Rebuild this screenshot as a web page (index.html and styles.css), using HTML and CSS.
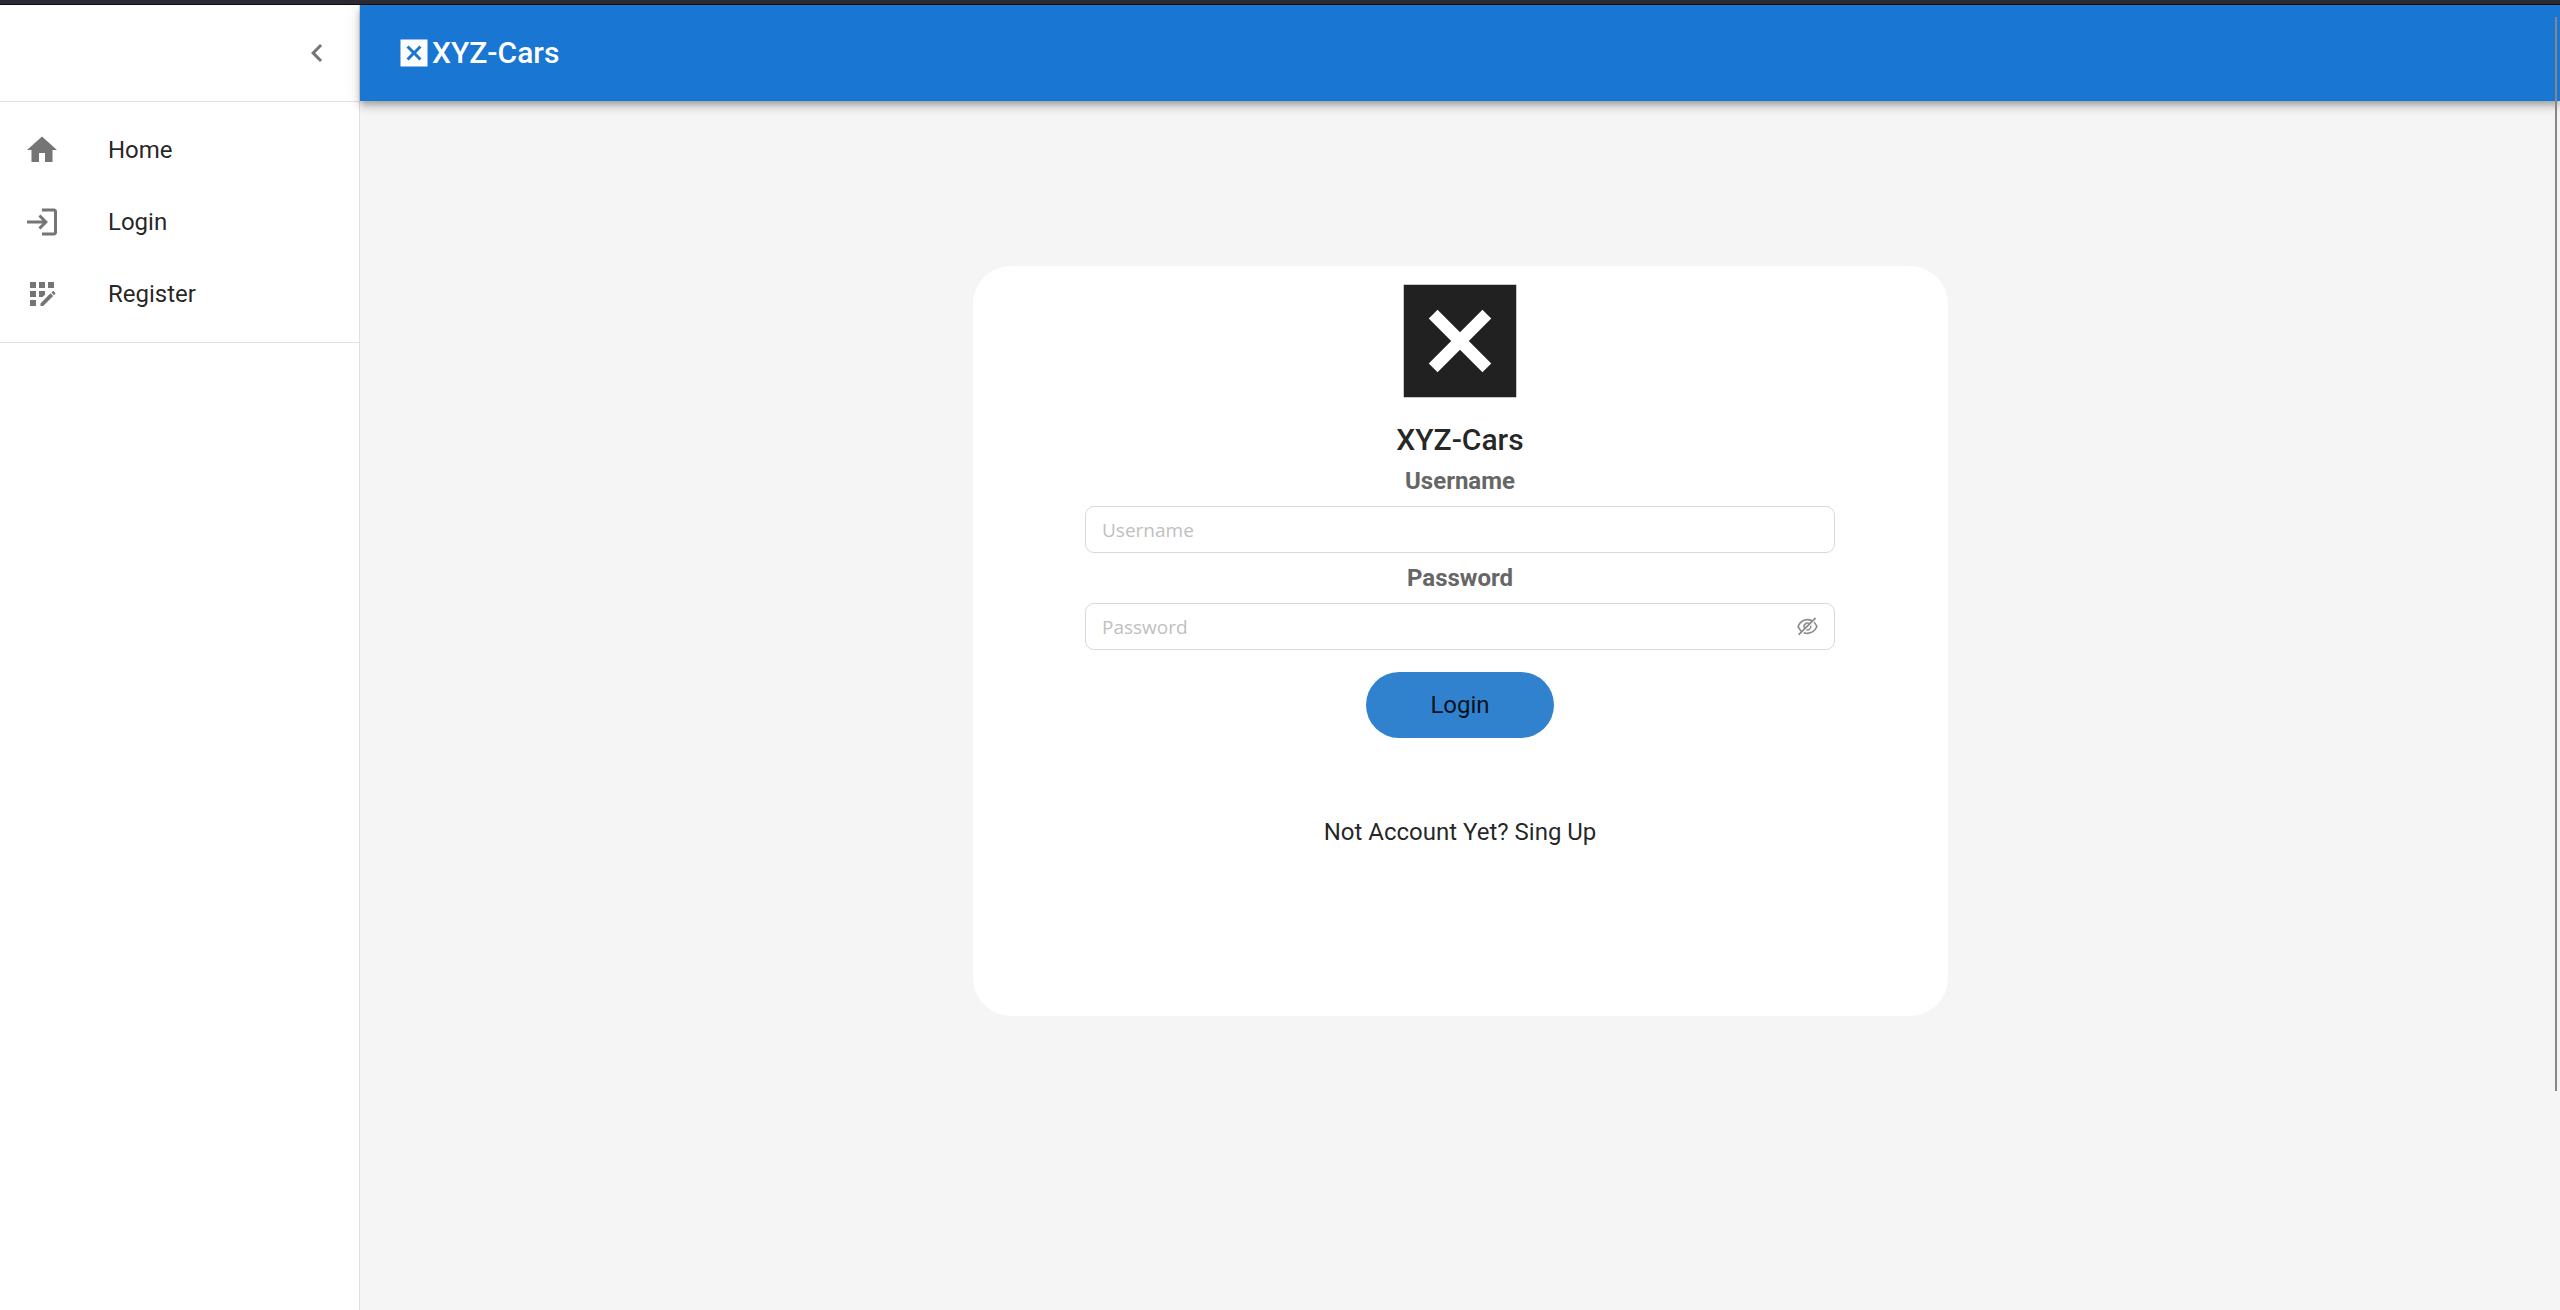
FILE: index.html
```html
<!DOCTYPE html>
<html lang="en">
<head>
<meta charset="utf-8">
<meta name="viewport" content="width=device-width, initial-scale=1">
<title>XYZ-Cars</title>
<link rel="stylesheet" href="styles.css">
</head>
<body>
<div class="window-edge"></div>
<div class="app">
  <aside class="drawer">
    <div class="drawer-header">
      <button class="icon-button" type="button" aria-label="Collapse menu">
        <svg class="icon" viewBox="0 0 24 24"><path d="M15.41 7.41 14 6l-6 6 6 6 1.41-1.41L10.83 12z"/></svg>
      </button>
    </div>
    <nav class="menu">
      <a class="menu-item" href="#home">
        <svg class="icon" viewBox="0 0 24 24"><path d="M10 20v-6h4v6h5v-8h3L12 3 2 12h3v8z"/></svg>
        <span>Home</span>
      </a>
      <a class="menu-item" href="#login">
        <svg class="icon" viewBox="0 0 24 24"><path d="M11 7 9.6 8.4l2.6 2.6H2v2h10.2l-2.6 2.6L11 17l5-5-5-5zm9 12h-8v2h8c1.1 0 2-.9 2-2V5c0-1.1-.9-2-2-2h-8v2h8v14z"/></svg>
        <span>Login</span>
      </a>
      <a class="menu-item" href="#register">
        <svg class="icon" viewBox="0 0 24 24"><path d="M10 4h4v4h-4zM4 16h4v4H4zm0-6h4v4H4zm0-6h4v4H4zm10 8.42V10h-4v4h2.42zm6.88-1.13-1.17-1.17c-.16-.16-.42-.16-.58 0l-.88.88L20 12.75l.88-.88c.16-.16.16-.42 0-.58zM11 18.25V20h1.75l6.67-6.67-1.75-1.75zM16 4h4v4h-4z"/></svg>
        <span>Register</span>
      </a>
    </nav>
  </aside>
  <div class="page">
    <header class="app-bar">
      <svg class="icon icon-light" viewBox="0 0 24 24"><path d="M3 3v18h18V3H3zm14 12.59L15.59 17 12 13.41 8.41 17 7 15.59 10.59 12 7 8.41 8.41 7 12 10.59 15.59 7 17 8.41 13.41 12 17 15.59z"/></svg>
      <span class="brand">XYZ-Cars</span>
    </header>
    <main class="content">
      <form class="card">
        <svg class="logo" viewBox="0 0 24 24"><path d="M3 3v18h18V3H3zm14 12.59L15.59 17 12 13.41 8.41 17 7 15.59 10.59 12 7 8.41 8.41 7 12 10.59 15.59 7 17 8.41 13.41 12 17 15.59z"/></svg>
        <h1 class="brand">XYZ-Cars</h1>
        <div class="field">
          <label class="label" for="username">Username</label>
          <div class="input-box"><input class="input" id="username" type="text" placeholder="Username"></div>
        </div>
        <div class="field">
          <label class="label" for="password">Password</label>
          <div class="input-box">
            <input class="input" id="password" type="password" placeholder="Password">
            <button class="reveal" type="button" aria-label="Show password">
              <svg class="eye" viewBox="64 64 896 896"><path d="M942.2 486.2Q889.47 375.11 816.7 305l-50.88 50.88C807.31 395.53 843.45 447.4 874.7 512 791.5 684.2 673.4 766 512 766q-72.67 0-133.87-22.38L323 798.75Q408 838 512 838q288.3 0 430.2-300.3a60.29 60.29 0 000-51.5zm-63.57-320.64L836 122.88a8 8 0 00-11.32 0L715.31 232.2Q624.86 186 512 186q-288.3 0-430.2 300.3a60.3 60.3 0 000 51.5q56.69 119.4 136.5 191.41L112.48 835a8 8 0 000 11.31L155.17 889a8 8 0 0011.31 0l712.15-712.12a8 8 0 000-11.32zM149.3 512C232.6 339.8 350.7 258 512 258c54.54 0 104.13 9.36 149.12 28.39l-70.3 70.3a176 176 0 00-238.13 238.13l-83.42 83.42C223.1 637.49 183.3 582.28 149.3 512zm246.7 0a112.11 112.11 0 01146.2-106.69L401.31 546.2A112 112 0 01396 512z"/><path d="M508 624c-3.46 0-6.87-.16-10.25-.47l-52.82 52.82a176.09 176.09 0 00227.42-227.42l-52.82 52.82c.31 3.38.47 6.79.47 10.25a111.94 111.94 0 01-112 112z"/></svg>
            </button>
          </div>
        </div>
        <button class="submit" type="submit">Login</button>
        <a class="signup" href="#register">Not Account Yet? Sing Up</a>
      </form>
    </main>
  </div>
</div>
<div class="scroll-thumb"></div>
</body>
</html>
```

FILE: styles.css
```css
*, *::before, *::after { box-sizing: border-box; }

body {
  margin: 0;
  min-height: 100vh;
  display: flex;
  flex-direction: column;
  background: #f5f5f5;
  color: rgba(0, 0, 0, 0.87);
  font-family: Roboto, "Liberation Sans", sans-serif;
  font-size: 24px;
  line-height: 36px;
}

a { color: inherit; text-decoration: none; }
button { border: 0; padding: 0; background: none; color: inherit; font: inherit; cursor: pointer; }

.window-edge {
  position: relative;
  z-index: 3;
  height: 5px;
  background: #2b2a33;
  border-bottom: 1px solid #0c0c0d;
}

.app { flex: 1; display: flex; }

.drawer {
  flex: 0 0 360px;
  background: #fff;
  border-right: 1px solid #e0e0e0;
}

.drawer-header {
  display: flex;
  align-items: center;
  justify-content: flex-end;
  height: 97px;
  padding: 0 12px;
  border-bottom: 1px solid #e0e0e0;
}

.icon-button { display: flex; padding: 12px; }
.icon { flex: none; width: 36px; height: 36px; fill: #757575; }
.icon-light { fill: #fff; }

.menu { padding: 12px 0; border-bottom: 1px solid #e0e0e0; }

.menu-item {
  display: flex;
  align-items: center;
  gap: 48px;
  height: 72px;
  padding: 0 24px;
}

.page { flex: 1; min-width: 0; display: flex; flex-direction: column; }

.app-bar {
  position: relative;
  z-index: 2;
  display: flex;
  align-items: center;
  height: 96px;
  padding: 0 36px;
  background: #1976d2;
  color: #fff;
  box-shadow: 0 3px 6px -1px rgba(0, 0, 0, 0.2), 0 6px 8px 0 rgba(0, 0, 0, 0.14), 0 2px 15px 0 rgba(0, 0, 0, 0.12);
}

.brand { margin: 0; font-size: 30px; line-height: 48px; font-weight: 500; }

.content { flex: 1; display: flex; justify-content: center; align-items: flex-start; padding: 165px 36px 36px; }

.card {
  display: flex;
  flex-direction: column;
  align-items: center;
  width: 100%;
  max-width: 975px;
  min-height: 750px;
  border-radius: 38px;
  background: #fff;
}

.logo { width: 150px; height: 150px; fill: #212121; }

.field { display: flex; flex-direction: column; align-items: center; width: 100%; max-width: 750px; margin-bottom: 8px; }
.label { color: #666; font-weight: 700; line-height: 34px; margin-bottom: 8px; }

.input-box {
  display: flex;
  align-items: center;
  width: 100%;
  height: 47px;
  padding: 0 16px;
  border: 1px solid #d9d9d9;
  border-radius: 9px;
  background: #fff;
}

.input {
  flex: 1;
  min-width: 0;
  padding: 2px 0 0;
  border: 0;
  outline: 0;
  background: none;
  font-family: "Open Sans", "Noto Sans", sans-serif;
  font-size: 19px;
  line-height: 33px;
}
.input::placeholder { color: #bfbfbf; opacity: 1; }

.reveal { display: flex; }
.eye { width: 21px; height: 21px; fill: #8c8c8c; }

.submit {
  width: 188px;
  height: 66px;
  margin: 14px 0 76px;
  border-radius: 33px;
  background: #3182ce;
}

.scroll-thumb {
  position: absolute;
  z-index: 4;
  top: 17px;
  right: 3px;
  width: 2px;
  height: 82vh;
  background: #868686;
}
```
